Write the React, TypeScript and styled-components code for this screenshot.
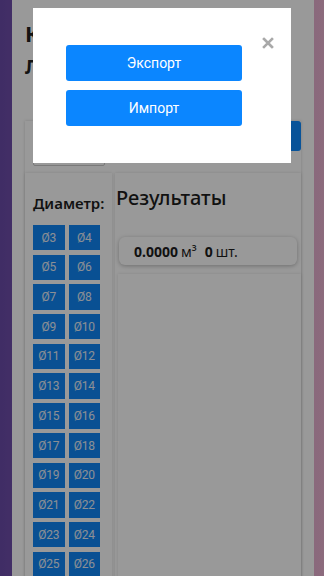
import React from "react";
import styled, { createGlobalStyle } from "styled-components";

const Global = createGlobalStyle`
  html, body { margin: 0; padding: 0; }
  body {
    height: 576px;
    background: linear-gradient(90deg, #6b4ba9 0%, #a77fbf 50%, #eab2d0 100%);
    font-family: "Noto Sans", "Open Sans", sans-serif;
    color: #222;
    overflow: hidden;
  }
`;

const Page = styled.div`
  margin: 0 10px 0 12px;
  height: 576px;
  overflow: hidden;
  background: #fff;
  padding: 18px 13px 0 13px;
  box-sizing: border-box;
`;

const Title = styled.h1`
  margin: 0;
  font-size: 22px;
  line-height: 30px;
  font-weight: 700;
  white-space: nowrap;
`;

const SubTitle = styled.h2`
  margin: 6px 0 0 0;
  font-size: 19px;
  line-height: 26px;
  font-weight: 700;
  white-space: nowrap;
`;

const Card = styled.div`
  margin-top: 41px;
  background: #fff;
  box-shadow: 0 0 3px rgba(0, 0, 0, 0.18);
`;

const TopRow = styled.div`
  display: flex;
  justify-content: space-between;
  align-items: flex-start;
  height: 52px;
`;

const NameInput = styled.div`
  margin: 15px 0 0 8px;
  width: 72px;
  height: 30px;
  box-sizing: border-box;
  border: 1px solid #ccc;
  border-radius: 2px;
`;

const SaveButton = styled.div`
  width: 70px;
  height: 30px;
  border-radius: 3px;
  background: #0e8bff;
`;

const Columns = styled.div`
  display: grid;
  grid-template-columns: 87px 1fr;
  column-gap: 3px;
  min-height: 420px;
`;

const LeftCol = styled.div`
  padding: 20px 8px 0 8px;
  box-shadow: 0 0 3px rgba(0, 0, 0, 0.14);
`;

const RightCol = styled.div`
  padding: 12px 2px 0 1px;
  box-shadow: 0 0 3px rgba(0, 0, 0, 0.14);
`;

const Label = styled.div`
  font-size: 15px;
  line-height: 20px;
  font-weight: 600;
  color: #1d1d1d;
  white-space: nowrap;
`;

const Grid = styled.div`
  margin-top: 12px;
  display: grid;
  grid-template-columns: 31.5px 31.5px;
  grid-auto-rows: 25.4px;
  column-gap: 4px;
  row-gap: 4.3px;
`;

const Tile = styled.div`
  background: #0f86f5;
  color: #e8eef8;
  font-family: Roboto, "Noto Sans", sans-serif;
  font-size: 12px;
  display: flex;
  align-items: center;
  justify-content: center;
  letter-spacing: -0.3px;
`;

const ResultsTitle = styled.div`
  font-size: 20px;
  line-height: 26px;
  font-weight: 500;
  color: #1d1d1d;
`;

const ResultBox = styled.div`
  margin: 26px 2px 0 3px;
  height: 28px;
  border-radius: 6px;
  box-shadow: 0 1px 4px rgba(0, 0, 0, 0.28);
  display: flex;
  align-items: center;
  padding-left: 15px;
  font-size: 14px;
  color: #1d1d1d;
  white-space: nowrap;
`;

const Bold = styled.b`
  font-weight: 700;
`;

const Unit = styled.span`
  margin: 0 8px 0 3px;
  font-weight: 400;
`;

const ListPanel = styled.div`
  margin: 9px -2px 0 2px;
  min-height: 400px;
  box-shadow: 0 0 3px rgba(0, 0, 0, 0.12);
`;

const Overlay = styled.div`
  position: fixed;
  inset: 0;
  background: rgba(0, 0, 0, 0.4);
`;

const Modal = styled.div`
  position: relative;
  margin: 8px auto 0 auto;
  width: 258px;
  box-sizing: border-box;
  background: #fff;
  padding: 37px 49px 37px 33px;
  display: flex;
  flex-direction: column;
  gap: 9px;
`;

const ModalButton = styled.button`
  height: 36px;
  border: none;
  border-radius: 3px;
  background: #0b86ff;
  color: #fff;
  font-family: Roboto, "Noto Sans", sans-serif;
  font-size: 14px;
  padding: 0;
`;

const Close = styled.div`
  position: absolute;
  top: 24px;
  right: 17px;
  width: 12px;
  height: 12px;
`;

const diameters = Array.from({ length: 24 }, (_, i) => i + 3);

export default function App() {
  return (
    <>
      <Global />
      <Page>
        <Title>Калькулятор</Title>
        <SubTitle>Лес</SubTitle>
        <Card>
          <TopRow>
            <NameInput />
            <SaveButton />
          </TopRow>
          <Columns>
            <LeftCol>
              <Label>Диаметр:</Label>
              <Grid>
                {diameters.map((d) => (
                  <Tile key={d}>Ø{d}</Tile>
                ))}
              </Grid>
            </LeftCol>
            <RightCol>
              <ResultsTitle>Результаты</ResultsTitle>
              <ResultBox>
                <Bold>0.0000</Bold>
                <Unit>м³</Unit>
                <Bold>0</Bold>
                <Unit>шт.</Unit>
              </ResultBox>
              <ListPanel />
            </RightCol>
          </Columns>
        </Card>
      </Page>
      <Overlay>
        <Modal>
          <ModalButton>Экспорт</ModalButton>
          <ModalButton>Импорт</ModalButton>
          <Close>
            <svg width="12" height="12" viewBox="0 0 12 12">
              <path d="M2 2 L10 10 M10 2 L2 10" stroke="#a9a9a9" strokeWidth="2.6" strokeLinecap="square" />
            </svg>
          </Close>
        </Modal>
      </Overlay>
    </>
  );
}
